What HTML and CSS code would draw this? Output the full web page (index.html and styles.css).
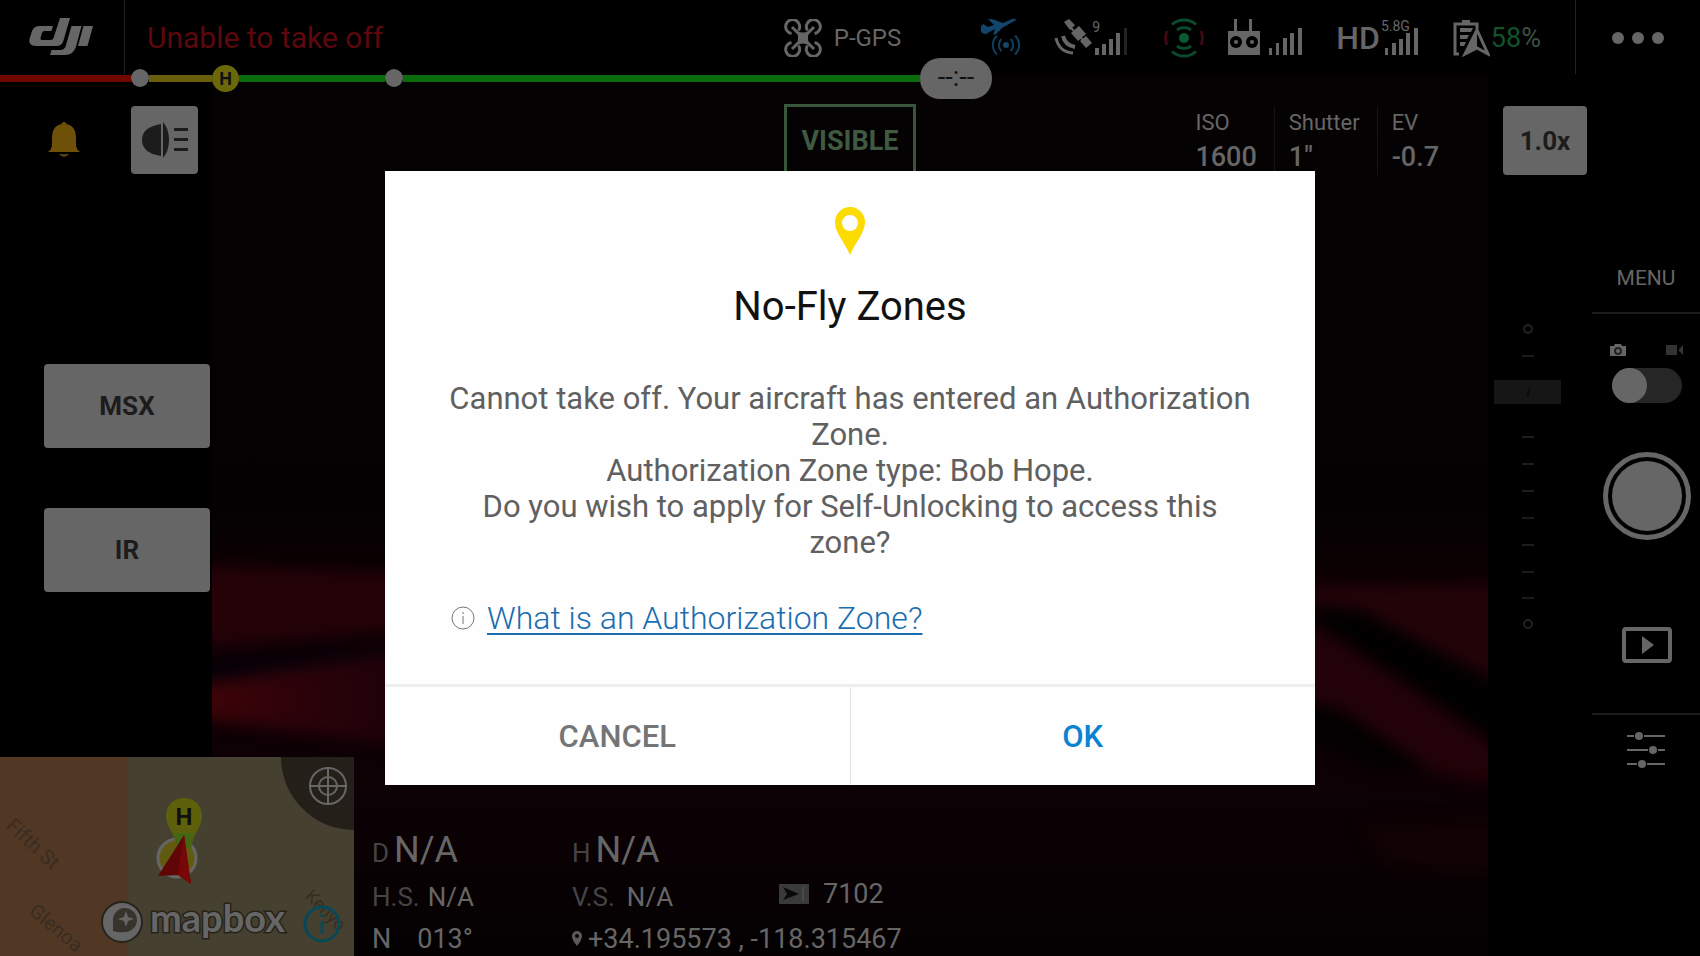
FILE: index.html
```
<!DOCTYPE html>
<html lang="en">
<head>
    <meta charset="UTF-8">
    <meta name="viewport" content="width=device-width, initial-scale=1.0">
    <title>DJI Pilot</title>
    <link rel="stylesheet" href="styles.css">
</head>
<body>
    <div class="app">
        <!-- Camera feed -->
        <svg class="feed" viewBox="212 0 1276 956" preserveAspectRatio="none" aria-hidden="true">
            <defs>
                <filter id="soft" x="-20%" y="-20%" width="140%" height="140%" color-interpolation-filters="sRGB"><feGaussianBlur stdDeviation="8"/></filter>
                <linearGradient id="base" x1="0" y1="0" x2="0" y2="1">
                    <stop offset="0" stop-color="#000"/>
                    <stop offset=".1" stop-color="#050203"/>
                    <stop offset=".52" stop-color="#030102"/>
                    <stop offset=".6" stop-color="#0c0103"/>
                    <stop offset=".8" stop-color="#0e0105"/>
                    <stop offset="1" stop-color="#040102"/>
                </linearGradient>
                <linearGradient id="glow" x1="0" y1="0" x2="1" y2="0">
                    <stop offset="0" stop-color="#420408"/>
                    <stop offset=".6" stop-color="#2a0209"/>
                    <stop offset="1" stop-color="#1e0109"/>
                </linearGradient>
            </defs>
            <rect x="212" y="0" width="1276" height="956" fill="url(#base)"/>
            <g filter="url(#soft)">
                <polygon points="180,564 400,574 400,630 180,650" fill="#240208"/>
                <polygon points="180,666 400,646 400,652 180,684" fill="#04010a"/>
                <polygon points="180,688 400,650 400,745 180,716" fill="url(#glow)"/>
                <polygon points="1300,586 1520,584 1520,692 1380,628 1300,604" fill="#220308"/>
                <polygon points="1300,618 1400,680 1520,765 1520,790 1400,765 1300,700" fill="#220208"/>
                <polygon points="1300,606 1360,610 1520,695 1520,756 1400,676" fill="#010000"/>
                <polygon points="1300,700 1340,710 1430,770 1380,770 1300,735" fill="#020000"/>
                <polygon points="1360,826 1520,820 1520,876 1390,866" fill="#120203"/>
            </g>
        </svg>

        <header class="topbar">
            <a href="#" class="logo" aria-label="DJI">
                <svg width="66" height="38" viewBox="0 0 66 38" fill="#666">
                    <path d="M32 0h10l-6.500 22.500Q34 28 28 28H8Q0 28 1.500 21L4 13Q6 8 12 8h13l-1.500 5h-7q-2 0-2.600 2l-1.400 5q-.5 2 1.500 2h8.500q2.500 0 3.200-2.500z"/>
                    <path d="M43.500 8h10l-5.500 20.500Q45.500 37 37 37H22l1.500-5h8.500q4.500 0 5.700-4z"/>
                    <path d="M55.500 8H65l-5.500 20H50z"/>
                </svg>
            </a>
            <p class="warning">Unable to take off</p>
            <div class="status">
                <div class="mode">
                    <svg width="38" height="38" viewBox="0 0 38 38" fill="none" stroke="#666" stroke-width="3">
                        <path d="M14.500 11.500A7 7 0 1 0 7.500 14.500M23.500 11.500A7 7 0 1 1 30.500 14.500M14.500 26.500A7 7 0 1 1 7.500 23.500M23.500 26.500A7 7 0 1 0 30.500 23.500"/>
                        <path d="M8 8l22 22M30 8L8 30"/>
                        <path d="M13 12q6 3 12 0 -2 7 0 14 -6-3-12 0 2-7 0-14z" fill="#666" stroke="none"/>
                    </svg>
                    <span>P-GPS</span>
                </div>
                <svg class="ic-radar" width="40" height="40" viewBox="0 0 40 40" fill="none" stroke="#0f3f5f" stroke-width="2">
                    <path d="M2 6l5 3 6-2-6-6 4 0 11 4 9-4q4-1 4 1l-14 8-6 6-3 1 2-6-9 5q-5 0-7-5z" fill="#12456b" stroke="none"/>
                    <circle cx="25" cy="27" r="3" fill="#12456b" stroke="none"/>
                    <path d="M20.500 21a8 8 0 0 0 0 12M29.500 21a8 8 0 0 1 0 12M16 17.500a13 13 0 0 0 0 19M34 17.500a13 13 0 0 1 0 19"/>
                </svg>
                <div class="signal ic-gps">
                    <svg width="74" height="38" viewBox="0 0 74 38" fill="#666">
                        <path d="M10 3l5-3 6 6-5 5zM17 14l8-7 7 8-8 7zM26 22l6-5 6 7-6 5z"/>
                        <path d="M13 5l20 20" stroke="#666" stroke-width="2"/>
                        <path d="M9 17q2 9 12 11" fill="none" stroke="#666" stroke-width="4"/>
                        <path d="M2 19q3 14 17 15" fill="none" stroke="#666" stroke-width="3"/>
                        <path d="M41 29h4v7h-4zM48 25h4v11h-4zM55 20h4v16h-4zM62 14h4v22h-4z"/>
                        <path d="M70 9h3v27h-3z" fill="#222"/>
                    </svg>
                    <sup class="sup-gps">9</sup>
                </div>
                <svg class="ic-vision" width="40" height="40" viewBox="0 0 40 40" fill="none" stroke="#0a4b2b" stroke-width="3">
                    <circle cx="20" cy="20" r="5" fill="#0a5a32" stroke="none"/>
                    <path d="M13 12a11 11 0 0 1 14 0M13 28a11 11 0 0 0 14 0M8 6.500a18 18 0 0 1 24 0M8 33.500a18 18 0 0 0 24 0"/>
                    <path d="M3 13a18 18 0 0 0 0 14M37 13a18 18 0 0 1 0 14" stroke="#3d0812"/>
                </svg>
                <svg class="ic-rc" width="76" height="38" viewBox="0 0 76 38" fill="#666">
                    <path d="M7 0h3v13H7zM22 0h3v13h-3zM1 12h32v24H1z"/>
                    <circle cx="9" cy="23" r="6" fill="#000"/><circle cx="25" cy="23" r="6" fill="#000"/>
                    <circle cx="9" cy="23" r="2"/><circle cx="25" cy="23" r="2"/>
                    <path d="M42 29h3v7h-3zM49 24h3v12h-3zM56 19h4v17h-4zM63 14h4v22h-4zM71 9h4v27h-4z"/>
                </svg>
                <div class="signal ic-hd">
                    <span class="hd">HD</span>
                    <svg width="36" height="38" viewBox="0 0 36 38" fill="#666">
                        <path d="M1 29h3v7H1zM8 24h4v12H8zM15 20h4v16h-4zM22 14h4v22h-4zM30 9h4v27h-4z"/>
                    </svg>
                    <sup class="sup-hd">5.8G</sup>
                </div>
                <div class="battery">
                    <svg width="38" height="38" viewBox="0 0 38 38">
                        <path d="M7 35H3V5h22v5" fill="none" stroke="#666" stroke-width="3"/>
                        <path d="M10 1h8v4h-8zM8 9h13l-2 4H8zM8 16h9l-2 4H8zM8 23h6l-2 4H8z" fill="#666"/>
                        <path d="M25 11l11 24-11-6-12 6z" fill="none" stroke="#666" stroke-width="3"/>
                        <path d="M25 11v18l-12 6z" fill="#666"/>
                    </svg>
                    <span class="charge">58<span class="pct">%</span></span>
                </div>
            </div>
            <button type="button" class="more" aria-label="More">
                <svg width="52" height="12" viewBox="0 0 52 12" fill="#666"><circle cx="6" cy="6" r="6"/><circle cx="26" cy="6" r="6"/><circle cx="46" cy="6" r="6"/></svg>
            </button>
        </header>

        <div class="flight-bar">
            <span class="seg seg-red"></span>
            <span class="stop"></span>
            <span class="seg seg-yellow"></span>
            <span class="home">H</span>
            <span class="seg seg-green"></span>
            <span class="stop"></span>
            <span class="seg seg-rest"></span>
            <span class="time">--:--</span>
        </div>

        <div class="toolbar">
            <div class="tools">
                <svg width="32" height="36" viewBox="0 0 32 36" fill="#6e5008">
                    <path d="M16 0q2 0 2.500 2Q28 4 28 15v9q1 4 4 6H0q3-2 4-6v-9Q4 4 13.500 2 14 0 16 0z"/><path d="M11 32h10q-2 3-5 3t-5-3z" fill="#54400c"/>
                </svg>
                <button type="button" class="tile light" aria-label="Spotlight">
                    <svg width="46" height="36" viewBox="0 0 46 36" fill="#1c1c1c">
                        <path d="M19 2v32Q0 31 0 18T19 2zM21 0q6 7 6 18t-6 18z"/><path d="M32 6h14v3H32zM32 16h14v3H32zM32 26h14v3H32z"/>
                    </svg>
                </button>
            </div>
            <button type="button" class="visible">VISIBLE</button>
            <div class="exposure">
                <div class="param"><span>ISO</span><b>1600</b></div>
                <div class="param"><span>Shutter</span><b>1"</b></div>
                <div class="param"><span>EV</span><b>-0.7</b></div>
                <button type="button" class="tile zoom">1.0x</button>
            </div>
        </div>

        <main class="main">
            <div class="hud">
                <div class="middle">
                    <div class="modes">
                        <button type="button" class="tile mode-btn">MSX</button>
                        <button type="button" class="tile mode-btn">IR</button>
                    </div>
                    <svg class="gimbal" width="68" height="312" viewBox="0 0 68 312" aria-hidden="true">
                        <g fill="none" stroke="#222" stroke-width="2"><circle cx="34" cy="6" r="4"/><circle cx="34" cy="301" r="4"/></g>
                        <path d="M28 33h12M28 114h12M28 141h12M28 168h12M28 195h12M28 222h12M28 249h12M28 275h12" stroke="#1c1c1c" stroke-width="2"/>
                        <rect x="0" y="57" width="67" height="24" fill="#161616"/>
                        <path d="M36 64l-3 10" stroke="#0c0c0c" stroke-width="2"/>
                    </svg>
                </div>
                <div class="bottom">
                    <svg class="map" width="354" height="199" viewBox="0 0 354 199">
                        <rect width="354" height="199" fill="#454030"/>
                        <rect width="128" height="199" fill="#503825"/>
                        <g class="street">
                            <text x="5" y="70" transform="rotate(43 5 70)">Fifth St</text>
                            <text x="28" y="156" transform="rotate(40 28 156)">Glenoa</text>
                            <text x="304" y="140" transform="rotate(45 304 140)" class="small">Kenyo</text>
                        </g>
                        <path d="M281 0h73v73A73 73 0 0 1 281 0z" fill="#251f1a"/>
                        <g fill="none" stroke="#666" stroke-width="2"><circle cx="328" cy="29" r="18"/><circle cx="328" cy="29" r="9"/><path d="M328 10v38M309 29h38"/></g>
                        <circle cx="177" cy="101" r="19" fill="#625a10" stroke="#666" stroke-width="3"/>
                        <path d="M184 41c11 0 18 8 18 18 0 11-9 17-11 32h-14c-2-15-11-21-11-32 0-10 7-18 18-18z" fill="#5e600c"/>
                        <path d="M173 76h22l-4 15h-14z" fill="#466512"/>
                        <text class="pin-h" x="184" y="68">H</text>
                        <path d="M184 78l7 49-13-9-20 1z" fill="#600606"/>
                        <path d="M184 78l7 49-13-9z" fill="#780808"/>
                        <circle cx="122" cy="165" r="20" fill="#666" stroke="#26231b" stroke-width="2"/>
                        <path d="M113 174v-10a12 12 0 1 1 12 11q-6 1-12-1z" fill="#37322a"/>
                        <path d="M126 154l2 6 6 2-6 2-2 6-2-6-6-2 6-2z" fill="#666"/>
                        <text class="mapbox" x="150" y="175">mapbox</text>
                        <g fill="none" stroke="#074956" stroke-width="3"><circle cx="322" cy="167" r="17"/><path d="M322 164v13M322 157v3"/></g>
                    </svg>
                    <div class="telemetry">
                        <div class="item big"><span>D</span><b>N/A</b></div>
                        <div class="item big wide"><span>H</span><b>N/A</b></div>
                        <div class="item"><span>H.S.</span><b>N/A</b></div>
                        <div class="item"><span>V.S.</span><b class="vs">N/A</b></div>
                        <div class="item count">
                            <svg width="30" height="20" viewBox="0 0 30 20"><rect width="30" height="20" fill="#3a3a3a"/><path d="M4 3l16 7-16 6 4-6z" fill="#0a0a0a"/><path d="M24 3v14" stroke="#4a4a4a" stroke-width="2"/></svg>
                            <b>7102</b>
                        </div>
                        <div class="item heading"><b>N</b><b>013°</b></div>
                        <div class="item coords">
                            <svg width="10" height="16" viewBox="0 0 10 16"><path fill-rule="evenodd" d="M5 0a5 5 0 0 1 5 5q0 4-5 10Q0 9 0 5a5 5 0 0 1 5-5zm0 3a2 2 0 1 0 0 4 2 2 0 0 0 0-4z" fill="#5a5a5a"/></svg>
                            <b>+34.195573 , -118.315467</b>
                        </div>
                    </div>
                </div>
            </div>

            <aside class="camera">
                <button type="button" class="menu">MENU</button>
                <div class="capture">
                    <div class="kinds">
                        <svg width="16" height="12" viewBox="0 0 16 12"><path d="M0 2h4l1-2h6l1 2h4v10H0z" fill="#666"/><circle cx="8" cy="7" r="3" fill="none" stroke="#222" stroke-width="2"/></svg>
                        <svg width="18" height="12" viewBox="0 0 18 12" fill="#333"><path d="M0 1h11v10H0zM13 5l4-4v10l-4-4z"/></svg>
                    </div>
                    <input type="checkbox" class="switch" aria-label="Video mode">
                    <button type="button" class="shutter" aria-label="Take photo"></button>
                    <button type="button" class="playback" aria-label="Playback">
                        <svg width="50" height="36" viewBox="0 0 50 36"><rect x="2" y="2" width="46" height="32" rx="2" fill="none" stroke="#666" stroke-width="4"/><path d="M20 9l12 9-12 9z" fill="#666"/></svg>
                    </button>
                </div>
                <button type="button" class="settings" aria-label="Camera settings">
                    <svg width="38" height="36" viewBox="0 0 38 36" fill="#666" stroke="#666" stroke-width="2"><path d="M0 4h7M17 4h21M0 18h21M31 18h7M0 32h10M20 32h18"/><g stroke="none"><circle cx="12" cy="4" r="4"/><circle cx="26" cy="18" r="4"/><circle cx="15" cy="32" r="4"/></g></svg>
                </button>
            </aside>
        </main>
    </div>

    <div class="overlay">
        <section class="dialog" role="dialog" aria-modal="true" aria-labelledby="dialog-title">
            <div class="dialog-body">
                <svg class="pin" width="30" height="48" viewBox="0 0 30 48"><path fill-rule="evenodd" d="M15 0a15 15 0 0 1 15 15c0 11-9 19-15 33C9 34 0 26 0 15A15 15 0 0 1 15 0zm0 8a8 8 0 1 0 0 16 8 8 0 0 0 0-16z" fill="#fbdb00"/></svg>
                <h1 id="dialog-title">No-Fly Zones</h1>
                <p class="message">Cannot take off. Your aircraft has entered an Authorization Zone.<br>Authorization Zone type: Bob Hope.<br>Do you wish to apply for Self-Unlocking to access this zone?</p>
                <p class="help">
                    <svg width="24" height="24" viewBox="0 0 24 24" fill="none" stroke="#777" stroke-width="1"><circle cx="12" cy="12" r="11"/><path d="M12 10v8M12 6v2"/></svg>
                    <a href="#">What is an Authorization Zone?</a>
                </p>
            </div>
            <div class="dialog-actions">
                <button type="button" class="cancel">CANCEL</button>
                <button type="button" class="ok">OK</button>
            </div>
        </section>
    </div>
</body>
</html>
```
FILE: styles.css
```
* { box-sizing: border-box; }
body { margin: 0; background: #000; color: #666; font-family: Roboto, "Liberation Sans", sans-serif; }
svg { display: block; flex: none; }
p, h1 { margin: 0; }
b { font-weight: 400; }
button { margin: 0; padding: 0; border: none; background: none; color: inherit; font-family: inherit; cursor: pointer; }

.app { position: relative; display: flex; flex-direction: column; min-height: 100vh; overflow: hidden; }
.feed { position: absolute; top: 0; left: 212px; width: calc(100% - 424px); height: 100%; }
.topbar, .flight-bar, .toolbar, .main { position: relative; }

/* Top bar */
.topbar { display: flex; align-items: stretch; height: 74px; background: #000; }
.logo { display: flex; align-items: center; justify-content: center; width: 125px; padding-right: 3px; border-right: 1px solid #222; }
.warning { flex: 1; padding-left: 22px; font-size: 30px; line-height: 76px; color: #5c080d; }
.status { display: flex; align-items: center; padding-top: 2px; }
.mode { display: flex; align-items: center; gap: 12px; margin-right: 80px; font-size: 24px; }
.ic-radar { margin-right: 33px; }
.ic-gps { margin-right: 36px; }
.ic-vision { margin-right: 23px; }
.ic-rc { margin-right: 33px; }
.signal { position: relative; display: flex; align-items: center; gap: 4px; }
.signal sup { position: absolute; line-height: 16px; }
.sup-gps { left: 38px; top: 0; font-size: 14px; }
.sup-hd { right: 10px; top: -1px; font-size: 14px; }
.hd { font-size: 32px; font-weight: 500; }
.battery { display: flex; align-items: center; gap: 1px; margin-left: 32px; }
.charge { font-size: 27px; color: #12512c; }
.pct { color: #3c5042; }
.more { display: flex; align-items: center; justify-content: center; width: 125px; margin-left: 34px; padding-top: 2px; border-left: 1px solid #222; }

/* Remaining flight time */
.flight-bar { display: flex; align-items: center; width: 58.35%; height: 42px; margin-top: -17px; }
.seg { height: 7px; }
.seg-red { flex: 131; background: #700800; }
.seg-yellow { flex: 63; background: #6b5e0a; }
.seg-green { flex: 146; background: #0a6b0a; }
.seg-rest { flex: 516; background: #0a6b0a; }
.stop { width: 18px; height: 18px; border-radius: 50%; background: #666; }
.home { width: 27px; height: 27px; border-radius: 50%; background: #6b680a; color: #111; font-size: 18px; font-weight: 700; line-height: 28px; text-align: center; }
.time { width: 72px; height: 41px; border-radius: 20px; background: #666; color: #111; font-size: 27px; line-height: 38px; text-align: center; }

/* Tools row */
.toolbar { display: grid; grid-template-columns: 1fr auto 1fr; align-items: start; height: 79px; padding-top: 5px; }
.tools { display: flex; align-items: center; gap: 51px; padding: 2px 0 0 48px; }
.tile { border-radius: 4px; background: #666; color: #1c1c1c; font-size: 26px; font-weight: 700; }
.light { display: flex; align-items: center; justify-content: center; width: 67px; height: 68px; }
.visible { width: 132px; height: 74px; border: 3px solid #39553c; color: #3f5a40; font-size: 27px; font-weight: 700; }
.exposure { display: flex; justify-content: flex-end; padding: 2px 113px 0 0; }
.param { display: flex; flex-direction: column; padding: 0 17px 0 14px; border-left: 1px solid #141414; font-size: 22px; line-height: 34px; }
.param:first-child { border-left: none; }
.param b { font-size: 27px; font-weight: 500; }
.zoom { width: 84px; height: 69px; margin-left: 47px; }

/* Main area */
.main { display: flex; flex: 1; }
.hud { display: flex; flex: 1; flex-direction: column; }
.middle { display: flex; flex: 1; justify-content: space-between; padding: 0 30px 0 44px; }
.modes { display: flex; flex-direction: column; gap: 60px; padding-top: 186px; }
.mode-btn { width: 166px; height: 84px; }
.gimbal { margin-top: 145px; }
.bottom { display: flex; }

.street { fill: #3a2c20; font-size: 20px; }
.small { font-size: 18px; }
.pin-h { fill: #101010; font-size: 24px; font-weight: 700; text-anchor: middle; }
.mapbox { fill: #666; stroke: #26231b; stroke-width: 3px; paint-order: stroke; font-family: Lato, sans-serif; font-size: 38px; font-weight: 700; }

.telemetry { display: grid; grid-template-columns: 200px 207px auto; grid-template-rows: 39px 34px 34px; row-gap: 8px; align-content: end; padding-left: 18px; }
.item { display: flex; align-items: baseline; gap: 8px; font-size: 26px; line-height: 34px; }
.item span { color: #444; }
.big { gap: 5px; }
.big b { font-size: 36px; }
.wide { grid-column: span 2; }
.vs { padding-left: 4px; }
.count { align-items: center; align-self: start; gap: 14px; font-size: 27px; line-height: 28px; }
.heading { gap: 26px; font-size: 27px; }
.coords { grid-column: span 2; align-items: center; gap: 6px; font-size: 27px; }

/* Camera controls */
.camera { display: flex; flex-direction: column; width: 108px; }
.menu { height: 136px; padding-top: 66px; border-bottom: 2px solid #1c1c1c; font-size: 21px; }
.capture { display: flex; flex-direction: column; align-items: center; height: 401px; padding: 30px 0 0 2px; border-bottom: 2px solid #1c1c1c; }
.kinds { display: flex; justify-content: space-between; width: 74px; }
.switch { appearance: none; width: 70px; height: 35px; margin: 12px 0 0; border-radius: 18px; background: #262626; }
.switch::before { content: ""; display: block; width: 35px; height: 35px; border-radius: 50%; background: #666; }
.switch:checked::before { margin-left: auto; }
.shutter { width: 88px; height: 88px; margin-top: 49px; border: 5px solid #666; border-radius: 50%; padding: 4px; background: #666 content-box; }
.playback { margin-top: 87px; }
.settings { display: flex; justify-content: center; padding-top: 17px; }

/* No-fly dialog */
.overlay { position: fixed; inset: 0; display: flex; align-items: center; justify-content: center; }
.dialog { width: 930px; max-width: 100%; background: #fefefe; }
.dialog-body { padding: 36px 60px 46px; text-align: center; }
.pin { margin: 0 auto; }
.dialog h1 { margin-top: 28px; color: #111; font-size: 40px; font-weight: 400; line-height: 48px; }
.message { margin-top: 50px; color: #606060; font-size: 31px; line-height: 36px; }
.help { display: flex; align-items: center; gap: 12px; margin-top: 37px; padding-left: 6px; font-size: 32px; line-height: 40px; }
.help a { color: #1a6db0; font-weight: 300; text-decoration-thickness: 2px; text-underline-offset: 4px; }
.dialog-actions { display: flex; border-top: 3px solid #eee; }
.dialog-actions button { flex: 1; height: 98px; font-size: 31px; font-weight: 500; }
.dialog-actions .cancel { border-right: 1px solid #e4e4e4; color: #757575; }
.ok { color: #0a82d2; }
```
